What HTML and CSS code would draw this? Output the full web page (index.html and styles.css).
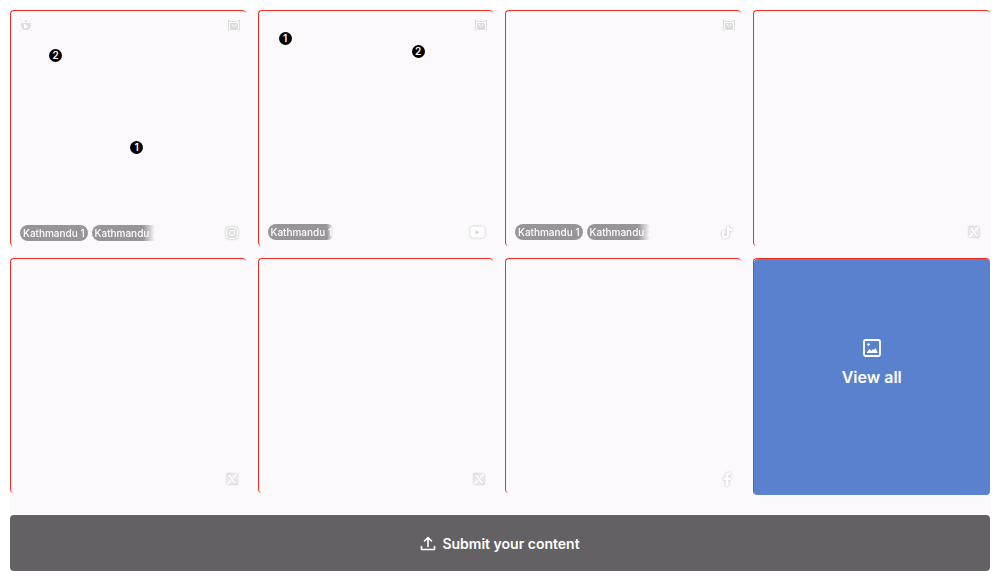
FILE: index.html
```html
<!DOCTYPE html>
<html lang="en">
<head>
<meta charset="utf-8">
<meta name="viewport" content="width=device-width, initial-scale=1">
<title>Gallery</title>
<link rel="stylesheet" href="styles.css">
</head>
<body>
<svg class="symbols" aria-hidden="true">
  <symbol id="reel" viewBox="0 0 12 12"><path fill="#dedede" d="M0 0h1v1H0zM11 0h1v1h-1zM0 11h1v1H0zM11 11h1v1h-1zM2 2h1v1H2zM5 1h2v2H5zM9 2h1v1H9zM1 4h10v4h-1v2H9v1H3v-1H2V8H1z"/><path fill="#fff" d="M4 4.500l4 3-4 2.500z"/></symbol>
  <symbol id="bag" viewBox="0 0 12 12"><path fill="#dcdcdc" d="M0 1h12v11H0z"/><path fill="none" stroke="#fff" d="M1.500 3.500h9v8h-9zM1.500 3.500l1-2h7l1 2M4 5c0 3 4 3 4 0"/></symbol>
  <symbol id="instagram" viewBox="0 0 16 16"><rect x="2" y="2" width="12" height="12" rx="3" fill="#dedede"/><g fill="none" stroke="#fff"><rect x="2.500" y="2.500" width="11" height="11" rx="3"/><circle cx="8" cy="8" r="2.600"/></g><circle cx="11" cy="5" r=".8" fill="#fff"/></symbol>
  <symbol id="youtube" viewBox="0 0 16 16"><rect x="1" y="3" width="13" height="10" rx="2.500" fill="#fff"/><path fill="#c8c8c8" d="M6 6.500l3 1.700-3 1.800z"/></symbol>
  <symbol id="tiktok" viewBox="0 0 16 16"><path fill="#fff" d="M8 2h2.300c.2 1.700 1.200 2.700 2.900 2.900v2.300c-1.100 0-2.100-.4-2.900-1v4.200a3.900 3.900 0 1 1-4.500-3.900v2.400a1.600 1.600 0 1 0 2.200 1.500z"/></symbol>
  <symbol id="x" viewBox="0 0 16 16"><path fill="#ebebeb" d="M3 3h10v10H3z"/><path fill="#fff" stroke="#d6d6d6" stroke-width=".8" d="M3 3h3l7 10h-3z"/><path stroke="#fff" stroke-width="1.200" d="M12.500 3L8.800 7.200M7.200 8.900L3.500 13"/></symbol>
  <symbol id="facebook" viewBox="0 0 16 16"><path fill="#fff" d="M6.500 15V9h-2V6.600h2V5c0-2.300 1.200-3.500 3.200-3.500H12v2.400h-1.100c-1 0-1.300.4-1.300 1.200v1.500H12L11.600 9h-2v6z"/></symbol>
</svg>
<main class="widget">
  <section class="grid">
    <article class="tile">
      <div class="top"><svg class="mark"><use href="#reel"/></svg><svg class="mark shop"><use href="#bag"/></svg></div>
      <span class="pin pin-a">2</span><span class="pin pin-b">1</span>
      <div class="bottom"><div class="tags"><span class="tag">Kathmandu 1</span><span class="tag">Kathmandu 2</span></div><svg class="source"><use href="#instagram"/></svg></div>
    </article>
    <article class="tile">
      <div class="top"><svg class="mark shop"><use href="#bag"/></svg></div>
      <span class="pin pin-c">1</span><span class="pin pin-d">2</span>
      <div class="bottom"><div class="tags short"><span class="tag">Kathmandu 1</span></div><svg class="source wide"><use href="#youtube"/></svg></div>
    </article>
    <article class="tile">
      <div class="top"><svg class="mark shop"><use href="#bag"/></svg></div>
      <div class="bottom raised"><div class="tags"><span class="tag">Kathmandu 1</span><span class="tag">Kathmandu 2</span></div><svg class="source"><use href="#tiktok"/></svg></div>
    </article>
    <article class="tile tile-edge"><div class="bottom raised"><svg class="source"><use href="#x"/></svg></div></article>
    <article class="tile"><div class="bottom raised"><svg class="source"><use href="#x"/></svg></div></article>
    <article class="tile"><div class="bottom raised"><svg class="source"><use href="#x"/></svg></div></article>
    <article class="tile"><div class="bottom raised"><svg class="source"><use href="#facebook"/></svg></div></article>
    <article class="tile tile-last">
      <div class="bottom raised"><svg class="source"><use href="#x"/></svg></div>
      <button class="view-all" type="button">
        <svg class="view-icon" viewBox="0 0 20 20"><rect x="2" y="2" width="16" height="16" rx="1.500" fill="none" stroke="#fff" stroke-width="1.800"/><circle cx="6.500" cy="6.500" r="1.300" fill="#fff"/><path fill="#fff" d="M5 15v-1l2.500-3 2 2 1.500-2 1 1 1.500-2 2 4v1z"/></svg>
        <span>View all</span>
      </button>
    </article>
  </section>
  <button class="submit" type="button">
    <svg class="upload" viewBox="0 0 16 16"><path fill="none" stroke="#fff" stroke-width="1.600" stroke-linecap="round" stroke-linejoin="round" d="M8 10.500V2M4.500 5L8 1.600 11.500 5M1.500 10.500v3h13v-3"/></svg>
    <span>Submit your content</span>
  </button>
</main>
</body>
</html>
```
FILE: styles.css
```css
* { box-sizing: border-box; }
body { margin: 10px; background: #fff; font-family: Inter, "Liberation Sans", sans-serif; }
button { border: 0; margin: 0; font: inherit; color: #fff; cursor: pointer; }
.symbols { display: none; }
.widget { display: flex; flex-direction: column; gap: 20px; background: #fbf9fc; }
.grid { display: grid; grid-template-columns: repeat(4, minmax(0, 1fr)); gap: 10px; }
.tile {
  position: relative;
  aspect-ratio: 1;
  display: flex;
  flex-direction: column;
  justify-content: space-between;
}
.tile::before {
  content: "";
  position: absolute;
  inset: 0 2px 2px 0;
  border: solid #f32d20;
  border-width: 1px 0 0 1px;
  border-radius: 4px;
  pointer-events: none;
}
.tile-edge::before { right: 0; }
.tile-last::before { inset: 0; }
.top { display: flex; padding: 9px 8px 0 10px; }
.mark { width: 12px; height: 12px; }
.shop { margin-left: auto; }
.bottom { display: flex; align-items: center; justify-content: space-between; margin-top: auto; padding: 0 8px 7px 10px; }
.raised { padding-bottom: 8px; }
.tags {
  display: flex;
  gap: 4px;
  width: 135px;
  overflow: hidden;
  -webkit-mask-image: linear-gradient(to left, transparent, #000 12px);
  mask-image: linear-gradient(to left, transparent, #000 12px);
}
.short { width: 65px; -webkit-mask-image: linear-gradient(to left, transparent, #000 6px); mask-image: linear-gradient(to left, transparent, #000 6px); }
.tag {
  flex: none;
  padding: 0 3px;
  border-radius: 8px;
  background: #979597;
  color: #fff;
  font-size: 10px;
  font-weight: 500;
  line-height: 16px;
}
.source { width: 16px; height: 16px; margin-left: auto; filter: drop-shadow(0 0 1px #b4b4b4); }
.wide { width: 18px; height: 18px; }
.pin {
  position: absolute;
  width: 13px;
  height: 13px;
  border-radius: 50%;
  background: #000;
  color: #fff;
  font-size: 10px;
  font-weight: 600;
  line-height: 13px;
  text-align: center;
}
.pin-a { left: 39px; top: 39px; }
.pin-b { left: 120px; top: 131px; }
.pin-c { left: 21px; top: 22px; }
.pin-d { left: 154px; top: 35px; }
.view-all {
  position: absolute;
  inset: 1px 0 0 1px;
  display: flex;
  flex-direction: column;
  align-items: center;
  justify-content: center;
  gap: 9px;
  padding: 0 0 29px;
  border-radius: 4px;
  background: rgba(80, 121, 203, 0.94);
  font-size: 16px;
  font-weight: 600;
  line-height: 20px;
}
.view-icon { width: 20px; height: 20px; }
.submit {
  display: flex;
  align-items: center;
  justify-content: center;
  gap: 6px;
  padding: 19px 18px 17px;
  border-radius: 4px;
  background: #636163;
  font-size: 14px;
  font-weight: 600;
  line-height: 20px;
}
.upload { width: 16px; height: 16px; }
```
